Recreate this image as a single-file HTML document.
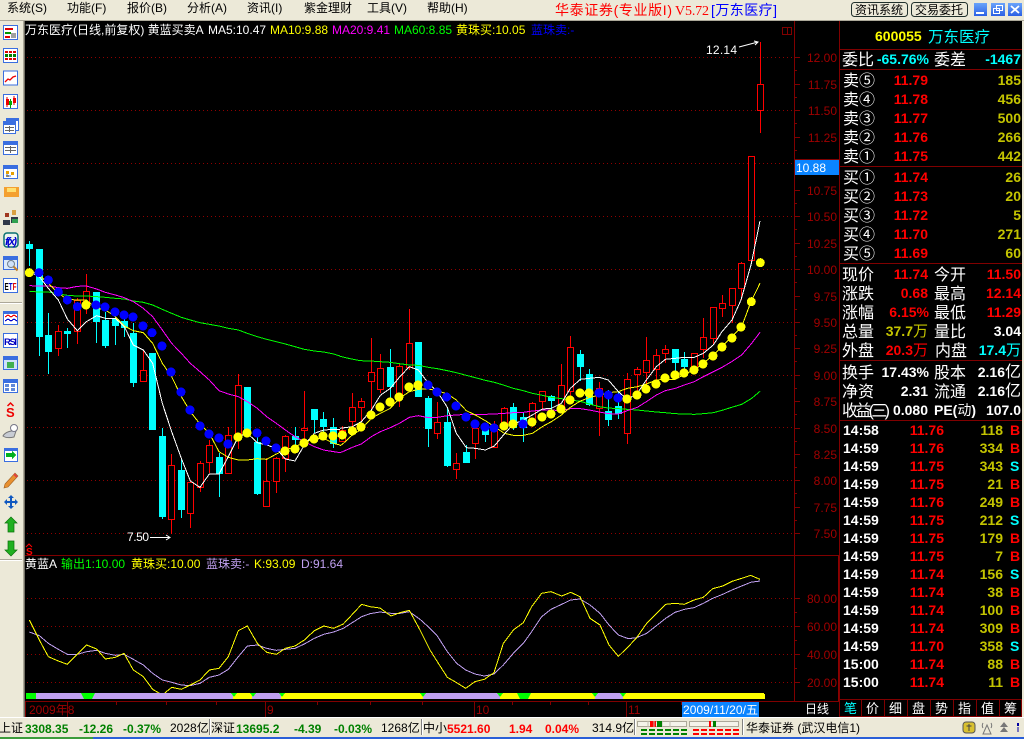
<!DOCTYPE html>
<html lang="zh"><head><meta charset="utf-8"><title>华泰证券</title>
<style>
html,body{margin:0;padding:0;background:#ece9d8;width:1024px;height:739px;overflow:hidden}
svg{display:block;font-family:"Liberation Sans","WenQuanYi Zen Hei","Noto Sans CJK SC",sans-serif}
.g{shape-rendering:crispEdges}
.ln polyline{fill:none;stroke-width:1;vector-effect:non-scaling-stroke;shape-rendering:crispEdges}
.m text{font-size:12px;fill:#000}
.a text{font-size:12px;fill:#a00000;text-anchor:end}
.b{font-size:14px;font-weight:bold}
.z{font-size:16px;fill:#fff}
.e{text-anchor:end}
.r{fill:#f00}.o{fill:#c4c400}.w{fill:#fff}.y{fill:#ff0}.c{fill:#0ff}
.s text{font-size:12px}
.n{font-weight:bold;font-size:13px;fill:#008000}
.t{font-weight:bold;font-size:13px;fill:#f00}
</style></head><body>
<svg width="1024" height="739" viewBox="0 0 1024 739" xmlns="http://www.w3.org/2000/svg">
<defs>
<linearGradient id="bl" x1="0" y1="0" x2="0" y2="1"><stop offset="0" stop-color="#6aa4fa"/><stop offset="1" stop-color="#2c60e4"/></linearGradient>
</defs>
<rect width="1024" height="739" fill="#ece9d8"/>
<!-- chart background -->
<rect x="25" y="21" width="997" height="696" fill="#000"/>
<rect x="0" y="20" width="1024" height="1" fill="#aca899"/>
<rect x="23" y="21" width="1" height="696" fill="#aca899"/>
<rect x="24" y="21" width="1" height="696" fill="#716f64"/>

<!-- menu -->
<g class="m">
<text x="7" y="12">系统(S)</text><text x="67" y="12">功能(F)</text><text x="127" y="12">报价(B)</text><text x="187" y="12">分析(A)</text><text x="247" y="12">资讯(I)</text><text x="304" y="12">紫金理财</text><text x="367" y="12">工具(V)</text><text x="427" y="12">帮助(H)</text>
</g>
<text x="555" y="15" font-size="14" fill="#f00" textLength="117">华泰证券(专业版I)</text>
<text x="675" y="15" font-size="14" fill="#f00" style="font-family:'Liberation Serif',serif" textLength="34">V5.72</text>
<text x="711" y="15" font-size="14" fill="#00f" textLength="66">[万东医疗]</text>
<rect x="851.5" y="2.5" width="56" height="14" rx="3" fill="#ece9d8" stroke="#20302c"/>
<text x="855" y="14" font-size="12" fill="#000">资讯系统</text>
<rect x="911.5" y="2.5" width="56" height="14" rx="3" fill="#ece9d8" stroke="#20302c"/>
<text x="915" y="14" font-size="12" fill="#000">交易委托</text>
<g class="g">
<rect x="974" y="3" width="13" height="13" fill="url(#bl)"/>
<rect x="976" y="12" width="8" height="2" fill="#fff"/>
<rect x="991" y="3" width="14" height="13" fill="url(#bl)"/>
<path d="M996.5 5.5h6v5h-6zM993.5 8.5h6v5h-6z" fill="none" stroke="#fff"/>
<rect x="1008" y="3" width="14" height="13" fill="url(#bl)"/>
</g>
<path d="M1011 6l8 7M1019 6l-8 7" stroke="#fff" stroke-width="1.8"/>

<!-- grid -->
<g class="g" stroke="#900000" stroke-dasharray="1 3" fill="none">
<path d="M27 57.5H794M27 110.5H794M27 163.5H794M27 216.5H794M27 269.5H794M27 322.5H794M27 375.5H794M27 427.5H794M27 480.5H794M27 533.5H794M27 598.5H794M27 626.5H794M27 654.5H794M27 682.5H794"/>
</g>

<!-- axis -->
<g class="g" fill="none" stroke="#800000">
<path d="M794.5 21V701M839.5 21V717M25 555.5H839M25 701.5H839"/>
<path d="M795 57.5h5M795 84.5h5M795 110.5h5M795 137.5h5M795 190.5h5M795 216.5h5M795 243.5h5M795 269.5h5M795 296.5h5M795 322.5h5M795 348.5h5M795 375.5h5M795 401.5h5M795 428.5h5M795 454.5h5M795 480.5h5M795 507.5h5M795 533.5h5M795 598.5h5M795 626.5h5M795 654.5h5M795 682.5h5"/>
<path d="M795 70.5h2M795 97.5h2M795 123.5h2M795 150.5h2M795 203.5h2M795 229.5h2M795 256.5h2M795 282.5h2M795 309.5h2M795 335.5h2M795 361.5h2M795 388.5h2M795 414.5h2M795 441.5h2M795 467.5h2M795 493.5h2M795 520.5h2M795 612.5h2M795 640.5h2M795 668.5h2"/>
<path d="M25.5 701V717M67.5 701V717M265.5 701V717M474.5 701V717M626.5 701V717M116.5 701v4M166.5 701v4M216.5 701v4M317.5 701v4M370.5 701v4M422.5 701v4M512.5 701v4M550.5 701v4M588.5 701v4M681.5 701v4"/>
<path d="M782.5 27.5h9v7h-9zM787.5 27.5v7"/>
<path d="M838.5 556V701" stroke="#8b0000"/>
</g>
<g class="a">
<text x="837" y="62">12.00</text><text x="837" y="89">11.75</text><text x="837" y="115">11.50</text><text x="837" y="142">11.25</text><text x="837" y="195">10.75</text><text x="837" y="221">10.50</text><text x="837" y="248">10.25</text><text x="837" y="274">10.00</text><text x="837" y="301">9.75</text><text x="837" y="327">9.50</text><text x="837" y="353">9.25</text><text x="837" y="380">9.00</text><text x="837" y="406">8.75</text><text x="837" y="433">8.50</text><text x="837" y="459">8.25</text><text x="837" y="485">8.00</text><text x="837" y="512">7.75</text><text x="837" y="538">7.50</text>
<text x="837" y="603">80.00</text><text x="837" y="631">60.00</text><text x="837" y="659">40.00</text><text x="837" y="687">20.00</text>
</g>
<rect x="795" y="160" width="44" height="15" fill="#0a84ff" class="g"/>
<rect x="795" y="159" width="44" height="1" fill="#800000" class="g"/>
<text x="796" y="172" font-size="12" fill="#fff">10.88</text>

<!-- candles -->
<path class="g" fill="none" stroke="#f00" d="M58.5 325V356M77.5 298V344M86.5 274V314M143.5 350V381M171.5 454V534M190.5 482V528M200.5 461V492M209.5 440V473M228.5 427V473M238.5 374V449M266.5 458V507M276.5 457V493M285.5 435V472M304.5 391V447M342.5 426V441M352.5 393V430M361.5 398V422M371.5 338V413M380.5 354V393M399.5 363V407M409.5 309V370M437.5 402V439M456.5 453V479M475.5 423V459M494.5 421V447M504.5 407V430M532.5 402V427M542.5 391V410M561.5 364V408M570.5 336V400M599.5 382V436M627.5 373V444M637.5 367V396M646.5 337V387M656.5 349V387M665.5 345V363M694.5 353V373M703.5 318V358M713.5 307V345M722.5 295V317M732.5 288V323M741.5 262V300M751.5 156V260M760.5 42V133"/>
<path class="g" fill="#000" stroke="#f00" d="M55.5 331.5h6V348.5h-6zM74.5 300.5h6V331.5h-6zM83.5 291.5h6V303.5h-6zM140.5 370.5h6V381.5h-6zM168.5 465.5h6V519.5h-6zM187.5 482.5h6V513.5h-6zM197.5 463.5h6V487.5h-6zM206.5 445.5h6V462.5h-6zM225.5 435.5h6V473.5h-6zM235.5 385.5h6V438.5h-6zM263.5 481.5h6V506.5h-6zM273.5 458.5h6V481.5h-6zM282.5 436.5h6V458.5h-6zM301.5 428.5h6V430.5h-6zM339.5 430.5h6V441.5h-6zM349.5 407.5h6V421.5h-6zM358.5 401.5h6V407.5h-6zM368.5 372.5h6V381.5h-6zM377.5 368.5h6V389.5h-6zM396.5 366.5h6V397.5h-6zM406.5 343.5h6V367.5h-6zM434.5 422.5h6V433.5h-6zM453.5 463.5h6V469.5h-6zM472.5 428.5h6V443.5h-6zM491.5 425.5h6V447.5h-6zM501.5 408.5h6V427.5h-6zM529.5 403.5h6V423.5h-6zM539.5 391.5h6V401.5h-6zM558.5 385.5h6V407.5h-6zM567.5 347.5h6V391.5h-6zM596.5 388.5h6V408.5h-6zM624.5 379.5h6V433.5h-6zM634.5 369.5h6V374.5h-6zM643.5 360.5h6V372.5h-6zM653.5 355.5h6V369.5h-6zM662.5 349.5h6V353.5h-6zM691.5 353.5h6V370.5h-6zM700.5 337.5h6V349.5h-6zM710.5 307.5h6V338.5h-6zM719.5 303.5h6V308.5h-6zM729.5 288.5h6V305.5h-6zM738.5 263.5h6V288.5h-6zM748.5 156.5h6V260.5h-6zM757.5 84.5h6V110.5h-6z"/>
<path class="g" fill="none" stroke="#0ff" d="M29.5 241V266M39.5 249V356M48.5 313V374M67.5 328V348M96.5 292V343M105.5 312V348M115.5 317V345M124.5 318V337M133.5 323V387M152.5 353V430M162.5 428V519M181.5 458V518M219.5 453V497M247.5 387V435M257.5 430V495M295.5 427V447M314.5 409V433M323.5 412V433M333.5 418V448M390.5 349V400M418.5 342V396M428.5 396V447M447.5 407V467M466.5 445V462M485.5 423V442M513.5 403V430M523.5 413V442M551.5 395V415M580.5 350V381M589.5 369V406M608.5 390V426M618.5 392V419M675.5 349V373M684.5 352V377"/>
<path class="g" fill="none" stroke="#0ff" stroke-width="7" d="M29.5 244V249M39.5 249V337M48.5 335V352M67.5 331V334M96.5 292V322M105.5 320V346M115.5 319V326M124.5 321V328M133.5 333V383M152.5 353V430M162.5 436V517M181.5 470V510M219.5 457V474M247.5 387V434M257.5 442V494M295.5 436V440M314.5 409V420M323.5 419V427M333.5 427V444M390.5 367V387M418.5 342V397M428.5 398V429M447.5 422V466M466.5 452V463M485.5 428V435M513.5 407V428M523.5 417V428M551.5 396V401M580.5 354V367M589.5 374V405M608.5 411V420M618.5 406V414M675.5 349V363M684.5 359V367"/>

<!-- MA lines left -->
<g class="ln" transform="translate(0 220) scale(.33333)">
<polyline stroke="#0f0" points="88,214 118,216 145,216 175,222 202,226 232,228 259,228 290,230 316,232 346,235 373,237 400,243 430,247 458,255 487,268 515,280 544,292 571,300 600,308 628,313 657,318 685,325 715,330 742,340 772,350 800,358 829,365 856,372 885,380 913,388 943,393 971,396 1001,402 1020,408"/>
<polyline stroke="#f0f" points="88,197 118,198 145,198 175,203 202,205 232,199 259,198 290,207 316,217 346,225 373,233 400,245 430,265 458,290 487,330 515,370 544,400 571,430 600,455 628,480 657,512 685,522 715,530 742,545 772,565 800,590 829,610 856,630 885,650 913,665 943,680 971,690 1001,695 1020,698"/>
<polyline stroke="#ff0" points="88,150 118,165 145,190 175,220 202,238 232,240 259,240 290,265 316,270 346,290 373,318 400,332 430,338 458,370 487,430 515,470 544,530 571,575 600,612 628,640 657,695 685,712 715,720 742,720 772,716 800,718 829,702 856,690 885,680 913,668 943,655 971,655 1001,670 1020,675"/>
<polyline stroke="#fff" points="88,155 118,170 145,205 175,240 202,297 232,332 259,305 290,287 316,295 346,295 373,320 400,375 430,390 458,430 487,550 515,635 544,715 571,783 600,802 628,762 657,762 685,710 715,650 742,640 772,668 800,675 829,685 856,717 885,723 913,675 943,640 971,630 1001,628 1020,628"/>
</g>
<g class="ln" transform="translate(340 320) scale(.33333)">
<polyline stroke="#0f0" points="0,109 30,116 60,122 90,123 120,125 150,127 178,131 208,135 235,136 265,142 292,146 322,152 349,158 379,166 406,173 436,181 463,187 493,196 520,205 550,212 577,220 607,226 634,232 664,236 691,240 721,244 748,252 778,260 805,264 835,266 862,268 892,270 919,273 949,276 976,278 1006,281 1033,282 1063,283 1090,281 1120,278 1146,271 1175,262 1205,253 1235,235 1260,214"/>
<polyline stroke="#f0f" points="0,398 8,395 37,382 64,372 94,350 121,335 151,323 178,310 208,292 235,287 265,293 292,292 322,287 349,285 379,283 406,283 436,283 463,282 493,280 520,278 550,277 577,273 607,270 634,270 664,272 691,266 721,266 748,270 778,276 805,281 835,282 862,272 892,262 919,245 949,225 976,212 1006,205 1033,195 1063,185 1090,170 1120,155 1146,142 1175,125 1205,105 1235,70 1260,37"/>
<polyline stroke="#ff0" points="0,377 8,372 37,345 64,328 94,295 121,280 151,265 178,235 208,215 235,208 265,207 292,212 322,222 349,240 379,272 406,285 436,302 463,320 493,340 520,346 550,346 577,340 607,320 634,305 664,285 691,262 721,243 748,233 778,225 805,218 835,215 862,205 892,200 919,192 949,180 976,178 1006,178 1033,163 1063,150 1090,130 1120,105 1146,80 1175,50 1205,20 1233,-55 1260,-110"/>
<polyline stroke="#fff" points="0,325 37,320 64,305 94,270 121,226 151,205 178,172 208,140 235,150 265,190 292,215 322,262 349,340 379,383 406,385 436,390 463,378 493,342 520,312 550,300 577,285 607,267 634,265 664,250 691,205 721,178 748,175 778,172 805,180 835,215 862,238 892,220 919,180 949,140 976,118 1006,115 1033,112 1063,112 1090,100 1120,75 1146,35 1176,0 1203,-60 1233,-165 1260,-297"/>
</g>

<!-- dots -->
<g class="g" transform="translate(0 220) scale(.33333)" fill="#00f">
<circle cx="117" cy="158" r="13.5"/><circle cx="145" cy="180" r="13.5"/><circle cx="175" cy="216" r="13.5"/><circle cx="202" cy="240" r="13.5"/><circle cx="232" cy="260" r="13.5"/><circle cx="288" cy="255" r="13.5"/><circle cx="315" cy="261" r="13.5"/><circle cx="345" cy="276" r="13.5"/><circle cx="372" cy="285" r="13.5"/><circle cx="399" cy="291" r="13.5"/><circle cx="429" cy="318" r="13.5"/><circle cx="456" cy="338" r="13.5"/><circle cx="486" cy="378" r="13.5"/><circle cx="513" cy="456" r="13.5"/><circle cx="543" cy="516" r="13.5"/><circle cx="570" cy="570" r="13.5"/><circle cx="600" cy="618" r="13.5"/><circle cx="627" cy="642" r="13.5"/><circle cx="657" cy="654" r="13.5"/><circle cx="684" cy="672" r="13.5"/><circle cx="771" cy="639" r="13.5"/><circle cx="798" cy="663" r="13.5"/><circle cx="828" cy="684" r="13.5"/>
<g fill="#ff0"><circle cx="88" cy="158" r="13.5"/><circle cx="258" cy="255" r="13.5"/><circle cx="714" cy="651" r="13.5"/><circle cx="741" cy="639" r="13.5"/><circle cx="855" cy="693" r="13.5"/><circle cx="885" cy="687" r="13.5"/><circle cx="912" cy="669" r="13.5"/><circle cx="942" cy="657" r="13.5"/><circle cx="969" cy="648" r="13.5"/><circle cx="999" cy="648" r="13.5"/></g>
</g>
<g class="g" transform="translate(340 320) scale(.33333)" fill="#ff0">
<circle cx="7" cy="345" r="13.5"/><circle cx="37" cy="333" r="13.5"/><circle cx="63" cy="321" r="13.5"/><circle cx="93" cy="285" r="13.5"/><circle cx="120" cy="261" r="13.5"/><circle cx="150" cy="246" r="13.5"/><circle cx="177" cy="231" r="13.5"/><circle cx="207" cy="201" r="13.5"/><circle cx="234" cy="195" r="13.5"/><circle cx="492" cy="318" r="13.5"/><circle cx="519" cy="312" r="13.5"/><circle cx="576" cy="306" r="13.5"/><circle cx="606" cy="291" r="13.5"/><circle cx="633" cy="282" r="13.5"/><circle cx="663" cy="267" r="13.5"/><circle cx="690" cy="240" r="13.5"/><circle cx="720" cy="219" r="13.5"/><circle cx="747" cy="219" r="13.5"/><circle cx="861" cy="237" r="13.5"/><circle cx="891" cy="225" r="13.5"/><circle cx="918" cy="207" r="13.5"/><circle cx="948" cy="192" r="13.5"/><circle cx="975" cy="174" r="13.5"/><circle cx="1005" cy="165" r="13.5"/><circle cx="1032" cy="159" r="13.5"/><circle cx="1062" cy="150" r="13.5"/><circle cx="1089" cy="132" r="13.5"/><circle cx="1119" cy="108" r="13.5"/><circle cx="1146" cy="81" r="13.5"/><circle cx="1176" cy="54" r="13.5"/><circle cx="1203" cy="21" r="13.5"/><circle cx="1234" cy="-55" r="13.5"/><circle cx="1261" cy="-172" r="13.5"/>
<g fill="#00f"><circle cx="264" cy="195" r="13.5"/><circle cx="291" cy="216" r="13.5"/><circle cx="320" cy="231" r="13.5"/><circle cx="348" cy="258" r="13.5"/><circle cx="378" cy="291" r="13.5"/><circle cx="405" cy="312" r="13.5"/><circle cx="435" cy="321" r="13.5"/><circle cx="462" cy="324" r="13.5"/><circle cx="549" cy="312" r="13.5"/><circle cx="777" cy="219" r="13.5"/><circle cx="805" cy="225" r="13.5"/><circle cx="834" cy="234" r="13.5"/></g>
</g>

<!-- annotations -->
<text x="706" y="54" font-size="12" fill="#fff" textLength="31">12.14</text>
<path d="M739 47L758 42M754 41l4 1-3 3" stroke="#fff" fill="none"/>
<text x="127" y="541" font-size="12" fill="#fff" textLength="22">7.50</text>
<path d="M150 537.5h20M166 535l4 2.5-4 2.5" stroke="#fff" fill="none"/>
<path d="M26 547l3-3 3 3" stroke="#f00" fill="none"/>
<text x="26" y="555" font-size="10" font-weight="bold" fill="#f00">S</text>

<!-- legends -->
<g font-size="12">
<text x="25" y="34" fill="#fff">万东医疗(日线,前复权) 黄蓝买卖A</text>
<text x="208" y="34" fill="#fff">MA5:10.47</text><text x="270" y="34" fill="#ff0">MA10:9.88</text><text x="332" y="34" fill="#f0f">MA20:9.41</text><text x="394" y="34" fill="#0f0">MA60:8.85</text><text x="456" y="34" fill="#ff0">黄珠买:10.05</text><text x="531" y="34" fill="#00f">蓝珠卖:-</text>
<text x="25" y="568" fill="#fff">黄蓝A</text><text x="61" y="568" fill="#0f0">输出1:10.00</text><text x="131" y="568" fill="#ff0">黄珠买:10.00</text><text x="206" y="568" fill="#c0a0f0">蓝珠卖:-</text><text x="254" y="568" fill="#ff0">K:93.09</text><text x="301" y="568" fill="#c0a0f0">D:91.64</text>
</g>

<!-- KD -->
<g class="ln" transform="translate(0 540) scale(.33333)">
<polyline stroke="#c0a0f0" points="88,276 118,287 145,310 175,328 202,343 232,343 260,335 290,331 316,340 346,346 372,343 400,358 430,375 458,400 487,420 515,427 544,435 571,437 600,430 628,412 657,405 685,388 715,350 742,318 772,315 800,325 829,331 856,328 885,325 913,312 943,295 971,283 1001,276 1030,265 1085,230 1110,221 1140,216 1173,220 1200,220 1228,215 1260,238"/>
<polyline stroke="#ff0" points="88,240 118,300 145,350 175,363 202,373 232,343 260,315 290,327 316,357 346,352 372,340 400,390 430,410 458,448 487,465 515,442 544,448 571,435 600,420 628,390 657,385 685,350 715,272 742,258 772,310 800,337 829,343 856,325 885,318 913,300 943,272 971,258 1001,265 1030,252 1085,193 1110,200 1140,204 1173,228 1200,218 1228,211 1260,270"/>
</g>
<g class="ln" transform="translate(420 540) scale(.33333)">
<polyline stroke="#c0a0f0" points="0,238 30,265 50,285 82,335 110,370 137,390 165,402 193,408 222,402 250,375 280,340 310,310 335,275 365,230 393,208 425,193 452,180 480,177 510,195 540,220 567,255 595,285 625,296 650,293 680,280 708,258 737,235 765,217 793,208 822,203 850,190 878,175 908,163 936,150 965,138 992,127 1020,123"/>
<polyline stroke="#ff0" points="0,270 30,330 50,362 82,412 110,428 137,445 165,425 193,418 222,398 250,310 280,270 310,248 335,200 365,160 393,155 425,168 452,157 480,170 510,235 540,255 567,315 595,349 625,320 650,293 680,250 708,222 737,193 765,190 793,193 822,180 850,172 878,146 908,138 936,124 965,115 992,106 1020,118"/>
</g>

<!-- band -->
<g class="g">
<rect x="26" y="693" width="10" height="6" fill="#0f0"/>
<rect x="36" y="693" width="197" height="6" fill="#c0a0f0"/>
<rect x="233" y="693" width="19" height="6" fill="#ff0"/>
<rect x="252" y="693" width="29" height="6" fill="#c0a0f0"/>
<rect x="281" y="693" width="142" height="6" fill="#ff0"/>
<rect x="423" y="693" width="77" height="6" fill="#c0a0f0"/>
<rect x="500" y="693" width="95" height="6" fill="#ff0"/>
<rect x="595" y="693" width="28" height="6" fill="#c0a0f0"/>
<rect x="623" y="693" width="140" height="6" fill="#ff0"/>
<path d="M763 693h1v1h1v5h-2z" fill="#ff0"/>
<path d="M81 693h14l-3 6h-8zM517 693h14l-3 6h-8zM231 693h6l-3 4zM250 693h6l-3 4zM279 693h6l-3 4zM420 693h6l-3 4zM497 693h6l-3 4zM592 693h6l-3 4zM620 693h6l-3 4z" fill="#0f0"/>
</g>

<!-- date axis -->
<g font-size="12" fill="#a00000">
<text x="29" y="714">2009年8</text><text x="267" y="714">9</text><text x="476" y="714">10</text><text x="628" y="714">11</text>
</g>
<rect x="682" y="702" width="77" height="15" fill="#0a84ff" class="g"/>
<text x="683" y="714" font-size="12" fill="#fff" textLength="75">2009/11/20/五</text>
<text x="805" y="713" font-size="12" fill="#fff">日线</text>

<!-- right panel -->
<g class="g" stroke="#800000" fill="none">
<path d="M840 49.5H1022M840 69.5H1022M840 166.5H1022M840 263.5H1022M840 360.5H1022M840 420.5H1022M840 699.5H1022M840 716.5H1022"/>
<path d="M861.5 700V716M884.5 700V716M907.5 700V716M930.5 700V716M953.5 700V716M976.5 700V716M999.5 700V716M1021.5 700V716"/>
</g>
<text x="875" y="41" class="b y">600055</text><text x="928" y="42" font-size="15.5" class="c">万东医疗</text>
<text x="842" y="65" class="z">委比</text><text x="929" y="64" class="b c e">-65.76%</text><text x="934" y="65" class="z">委差</text><text x="1021" y="64" class="b c e">-1467</text>

<text x="843" y="86" class="z">卖⑤</text><text x="928" y="85" class="b r e">11.79</text><text x="1021" y="85" class="b o e">185</text>
<text x="843" y="105" class="z">卖④</text><text x="928" y="104" class="b r e">11.78</text><text x="1021" y="104" class="b o e">456</text>
<text x="843" y="124" class="z">卖③</text><text x="928" y="123" class="b r e">11.77</text><text x="1021" y="123" class="b o e">500</text>
<text x="843" y="143" class="z">卖②</text><text x="928" y="142" class="b r e">11.76</text><text x="1021" y="142" class="b o e">266</text>
<text x="843" y="162" class="z">卖①</text><text x="928" y="161" class="b r e">11.75</text><text x="1021" y="161" class="b o e">442</text>
<text x="843" y="183" class="z">买①</text><text x="928" y="182" class="b r e">11.74</text><text x="1021" y="182" class="b o e">26</text>
<text x="843" y="202" class="z">买②</text><text x="928" y="201" class="b r e">11.73</text><text x="1021" y="201" class="b o e">20</text>
<text x="843" y="221" class="z">买③</text><text x="928" y="220" class="b r e">11.72</text><text x="1021" y="220" class="b o e">5</text>
<text x="843" y="240" class="z">买④</text><text x="928" y="239" class="b r e">11.70</text><text x="1021" y="239" class="b o e">271</text>
<text x="843" y="259" class="z">买⑤</text><text x="928" y="258" class="b r e">11.69</text><text x="1021" y="258" class="b o e">60</text>

<text x="842" y="280" class="z">现价</text><text x="928" y="279" class="b r e">11.74</text><text x="934" y="280" class="z">今开</text><text x="1021" y="279" class="b r e">11.50</text>
<text x="842" y="299" class="z">涨跌</text><text x="928" y="298" class="b r e">0.68</text><text x="934" y="299" class="z">最高</text><text x="1021" y="298" class="b r e">12.14</text>
<text x="842" y="318" class="z">涨幅</text><text x="929" y="317" class="b r e">6.15%</text><text x="934" y="318" class="z">最低</text><text x="1021" y="317" class="b r e">11.29</text>
<text x="842" y="337" class="z">总量</text><text x="928" y="336" class="b o e">37.7<tspan font-weight="normal" font-size="15">万</tspan></text><text x="934" y="337" class="z">量比</text><text x="1021" y="336" class="b w e">3.04</text>
<text x="842" y="356" class="z">外盘</text><text x="928" y="355" class="b r e">20.3<tspan font-weight="normal" font-size="15">万</tspan></text><text x="935" y="356" class="z">内盘</text><text x="1021" y="355" class="b c e">17.4<tspan font-weight="normal" font-size="15">万</tspan></text>

<text x="842" y="378" class="z">换手</text><text x="929" y="377" class="b w e">17.43%</text><text x="934" y="378" class="z">股本</text><text x="1021" y="377" class="b w e">2.16<tspan font-weight="normal" font-size="16">亿</tspan></text>
<text x="842" y="397" class="z">净资</text><text x="928" y="396" class="b w e">2.31</text><text x="934" y="397" class="z">流通</text><text x="1021" y="396" class="b w e">2.16<tspan font-weight="normal" font-size="16">亿</tspan></text>
<text x="842" y="416" class="z" textLength="48">收益(三)</text><text x="928" y="415" class="b w e">0.080</text><text x="934" y="415" class="b w">PE(<tspan font-weight="normal">动</tspan>)</text><text x="1021" y="415" class="b w e">107.0</text>

<!-- ticks -->
<g class="b">
<text x="843" y="435" class="w">14:58</text><text x="944" y="435" class="r e">11.76</text><text x="1003" y="435" class="o e">118</text><text x="1010" y="435" class="r">B</text>
<text x="843" y="453" class="w">14:59</text><text x="944" y="453" class="r e">11.76</text><text x="1003" y="453" class="o e">334</text><text x="1010" y="453" class="r">B</text>
<text x="843" y="471" class="w">14:59</text><text x="944" y="471" class="r e">11.75</text><text x="1003" y="471" class="o e">343</text><text x="1010" y="471" class="c">S</text>
<text x="843" y="489" class="w">14:59</text><text x="944" y="489" class="r e">11.75</text><text x="1003" y="489" class="o e">21</text><text x="1010" y="489" class="r">B</text>
<text x="843" y="507" class="w">14:59</text><text x="944" y="507" class="r e">11.76</text><text x="1003" y="507" class="o e">249</text><text x="1010" y="507" class="r">B</text>
<text x="843" y="525" class="w">14:59</text><text x="944" y="525" class="r e">11.75</text><text x="1003" y="525" class="o e">212</text><text x="1010" y="525" class="c">S</text>
<text x="843" y="543" class="w">14:59</text><text x="944" y="543" class="r e">11.75</text><text x="1003" y="543" class="o e">179</text><text x="1010" y="543" class="r">B</text>
<text x="843" y="561" class="w">14:59</text><text x="944" y="561" class="r e">11.75</text><text x="1003" y="561" class="o e">7</text><text x="1010" y="561" class="r">B</text>
<text x="843" y="579" class="w">14:59</text><text x="944" y="579" class="r e">11.74</text><text x="1003" y="579" class="o e">156</text><text x="1010" y="579" class="c">S</text>
<text x="843" y="597" class="w">14:59</text><text x="944" y="597" class="r e">11.74</text><text x="1003" y="597" class="o e">38</text><text x="1010" y="597" class="r">B</text>
<text x="843" y="615" class="w">14:59</text><text x="944" y="615" class="r e">11.74</text><text x="1003" y="615" class="o e">100</text><text x="1010" y="615" class="r">B</text>
<text x="843" y="633" class="w">14:59</text><text x="944" y="633" class="r e">11.74</text><text x="1003" y="633" class="o e">309</text><text x="1010" y="633" class="r">B</text>
<text x="843" y="651" class="w">14:59</text><text x="944" y="651" class="r e">11.70</text><text x="1003" y="651" class="o e">358</text><text x="1010" y="651" class="c">S</text>
<text x="843" y="669" class="w">15:00</text><text x="944" y="669" class="r e">11.74</text><text x="1003" y="669" class="o e">88</text><text x="1010" y="669" class="r">B</text>
<text x="843" y="687" class="w">15:00</text><text x="944" y="687" class="r e">11.74</text><text x="1003" y="687" class="o e">11</text><text x="1010" y="687" class="r">B</text>
</g>
<g font-size="13" fill="#fff">
<text x="844" y="713" class="c">笔</text><text x="866" y="713">价</text><text x="889" y="713">细</text><text x="912" y="713">盘</text><text x="935" y="713">势</text><text x="958" y="713">指</text><text x="981" y="713">值</text><text x="1004" y="713">筹</text>
</g>

<!-- status bar -->
<rect x="0" y="717" width="1024" height="20" fill="#ece9d8"/>
<rect x="0" y="717" width="1024" height="1" fill="#fff"/>
<rect x="0" y="737" width="1024" height="2" fill="#2a5fd8"/>
<rect x="0" y="737" width="93" height="2" fill="#3c9c3c"/>
<g class="s">
<text x="-1" y="732" fill="#000">上证</text><text x="25" y="733" class="n">3308.35</text><text x="79" y="733" class="n">-12.26</text><text x="123" y="733" class="n">-0.37%</text><text x="170" y="732" fill="#000">2028亿</text>
<text x="211" y="732" fill="#000">深证</text><text x="236" y="733" class="n">13695.2</text><text x="294" y="733" class="n">-4.39</text><text x="334" y="733" class="n">-0.03%</text><text x="381" y="732" fill="#000">1268亿</text>
<text x="423" y="732" fill="#000">中小</text><text x="447" y="733" class="t">5521.60</text><text x="509" y="733" class="t">1.94</text><text x="545" y="733" class="t">0.04%</text><text x="592" y="732" fill="#000">314.9亿</text>
<text x="746" y="732" fill="#000">华泰证券 (武汉电信1)</text>
</g>
<g class="g">
<path d="M209.5 719V735M421.5 719V735M634.5 719V735M742.5 719V735" stroke="#808080"/>
<path d="M210.5 719V735M422.5 719V735M635.5 719V735M743.5 719V735" stroke="#fff"/>
<path d="M637.5 721.5h49v5h-49zM689.5 721.5h49v5h-49z" fill="#f4f3ea" stroke="#aca899"/>
<path d="M650 721h6v6h-6z" fill="#f00"/><path d="M662 721v6M670 721v6M648 721v6M654 721v6" stroke="#c0bcae" fill="none"/>
<path d="M657 721h5v6h-5z" fill="#008000"/>
<path d="M709 721h2v6h-2z" fill="#f00"/><path d="M713 721h3v6h-3z" fill="#008000"/>
<path d="M641 729h6v2h-6zM649 729h6v2h-6zM657 729h6v2h-6zM665 729h6v2h-6zM673 729h6v2h-6zM681 729h6v2h-6zM641 733h6v2h-6zM649 733h6v2h-6zM657 733h6v2h-6zM665 733h6v2h-6zM673 733h6v2h-6zM681 733h6v2h-6z" fill="#008000"/>
<path d="M693 729h6v2h-6zM701 729h6v2h-6zM709 729h6v2h-6zM717 729h6v2h-6zM725 729h6v2h-6zM733 729h6v2h-6zM693 733h6v2h-6zM701 733h6v2h-6zM709 733h6v2h-6zM717 733h6v2h-6zM725 733h6v2h-6zM733 733h6v2h-6z" fill="#f00"/>
</g>
<rect x="963" y="722" width="12" height="11" rx="3" fill="#d8c030" stroke="#555"/>
<path d="M969 724v7M966.5 726h5" stroke="#444" fill="none"/>
<path d="M987 725L983 734h8zM983 723a5 5 0 0 0 0 5M991 723a5 5 0 0 1 0 5" fill="none" stroke="#777"/>
<path d="M1004 722l4 5h-8zM1004 727l4 5h-8z" fill="#777"/>
<path d="M1017 723h2v3h-2zM1017.5 727h1v5h-1z" fill="#0000a0"/>

<!-- sidebar -->
<g class="g">
<path d="M0 302.5h22M0 559.5h22" stroke="#aca899"/>
<path d="M0 303.5h22M0 560.5h22" stroke="#fff"/>
<g fill="#fff" stroke="#3a6ee0">
<rect x="3.5" y="25.5" width="14" height="14"/><rect x="3.5" y="48.5" width="14" height="14"/><rect x="3.5" y="71" width="14" height="14"/><rect x="3.5" y="94.5" width="14" height="14"/>
<rect x="6.5" y="118.5" width="12" height="12"/><rect x="3.5" y="121.5" width="12" height="12"/>
<rect x="3.5" y="141.5" width="14" height="13"/><rect x="3.5" y="165.5" width="14" height="13"/><rect x="3.5" y="256.5" width="14" height="13" fill="#dcebfb"/><rect x="3.5" y="278.5" width="14" height="14"/>
<rect x="3.5" y="311.5" width="14" height="13"/><rect x="3.5" y="333.5" width="14" height="14"/><rect x="3.5" y="356.5" width="14" height="13" fill="#cfe2fa"/><rect x="3.5" y="379.5" width="14" height="13"/><rect x="4.5" y="448.5" width="13" height="13"/>
</g>
<!-- window title bars -->
<path d="M4 122h11v3H4zM7 119h11v2H7zM4 142h13v3H4zM4 166h13v3H4zM4 257h13v3H4zM4 312h13v2H4zM4 357h13v3H4zM4 380h13v3H4zM5 449h12v2H5z" fill="#3a6ee0"/>
<path d="M5 28h8v2H5z" fill="#d00"/><path d="M5 32h6v2H5z" fill="#090"/><path d="M5 36h5v2H5z" fill="#d00"/>
<path d="M11 33h5v5h-5z" fill="#a0a0a0"/>
<path d="M5 51h3v2H5zM9 51h3v2H9zM13 51h3v2h-3zM5 58h3v2H5zM9 58h3v2H9zM13 58h3v2h-3z" fill="#d00"/>
<path d="M5 54h3v3H5zM9 54h3v3H9zM13 54h3v3h-3z" fill="#008000"/>
<path d="M7 97v10M14 96v9" stroke="#d00"/><path d="M10.5 99v9" stroke="#090"/>
<path d="M6 99h3v6H6zM13 98h3v5h-3z" fill="#e00"/><path d="M9 101h3v4H9z" fill="#0a0"/>
<path d="M5 127h9v1H5zM5 130h9v1H5zM5 147h11v1H5zM5 150h11v1H5z" fill="#666"/><path d="M9 126h1v6H9zM10 146h1v7h-1z" fill="#666"/>
<path d="M6 171h3v3H6zM11 172h3v3h-3zM6 175h3v2H6z" fill="#e8a000"/><path d="M7 174v2h4" fill="none" stroke="#3a6ee0"/>
<path d="M4 187h15v10H4z" fill="#f4a030"/><path d="M7 188h9v4H7z" fill="#ffe070"/>
<path d="M3 225h7v-5H3zM11 223h7v-6h-7z" fill="#303848"/>
<path d="M12 223h6v-4h-6z" fill="#30a050"/>
<rect x="5" y="213" width="4" height="4" fill="#a03820"/><rect x="12" y="210" width="4" height="5" fill="#d8a040"/>
<path d="M5 317l3-2 3 2 3-2 3 2" fill="none" stroke="#e00"/><path d="M5 321l3-2 3 2 3-2 3 2" fill="none" stroke="#00c"/>
<path d="M7 362h7v6H7z" fill="#40b050"/>
<path d="M5 384h4v3H5zM11 384h4v3h-4zM5 388h4v3H5zM11 388h4v3h-4z" fill="#6088d8"/>
<path d="M6 453h6v-2l4 4-4 4v-2H6z" fill="#00b020" stroke="none"/>
</g>
<path d="M5 82l3-3 2 1 3-3 3-1" fill="none" stroke="#e00" stroke-width="1.3"/>
<rect x="4" y="233" width="14" height="14" rx="3" fill="#eef4ee" stroke="#0a7070" stroke-width="1.5"/>
<text x="5" y="245" font-size="11" font-style="italic" font-weight="bold" fill="#0000d0" textLength="12">f(x)</text>
<circle cx="11" cy="264" r="3.5" fill="#cfe2fa" stroke="#708090"/><path d="M13.5 266.5l4 4" stroke="#c08030" stroke-width="2"/>
<text x="4.5" y="290" font-size="10" font-weight="bold" fill="#000" textLength="12" lengthAdjust="spacingAndGlyphs">E<tspan fill="#00c">T</tspan><tspan fill="#d00">F</tspan></text>
<text x="4" y="345" font-size="9.5" font-weight="bold" fill="#0000c0" textLength="13">RSI</text>
<text x="6" y="417" font-size="13" font-weight="bold" fill="#e00">S</text><path d="M7.5 406l3-3 3 3" stroke="#e00" fill="none" stroke-width="1.5"/>
<path d="M3 436c2-4 9-6 13-5l-2 6c-4 1-8 1-11-1z" fill="#c8ccd4" stroke="#777"/><circle cx="14" cy="428" r="3.5" fill="#fff" stroke="#778"/>
<path d="M5 484l10-11 3 3-10 11-4 1z" fill="#e89030" stroke="#a06020" stroke-width=".6"/><path d="M14 474l3 3" stroke="#e04040" stroke-width="2"/>
<path d="M11 495l3 3h-2v3h3v-2l3 3-3 3v-2h-3v3h2l-3 3-3-3h2v-3H7v2l-3-3 3-3v2h3v-3H8z" fill="#1058c0"/>
<path d="M11 517l6 6h-3v9H8v-9H5z" fill="#20b020" stroke="#0a700a" stroke-width=".7"/>
<path d="M11 556l6-6h-3v-9H8v9H5z" fill="#20b020" stroke="#0a700a" stroke-width=".7"/>
</svg>
</body></html>
